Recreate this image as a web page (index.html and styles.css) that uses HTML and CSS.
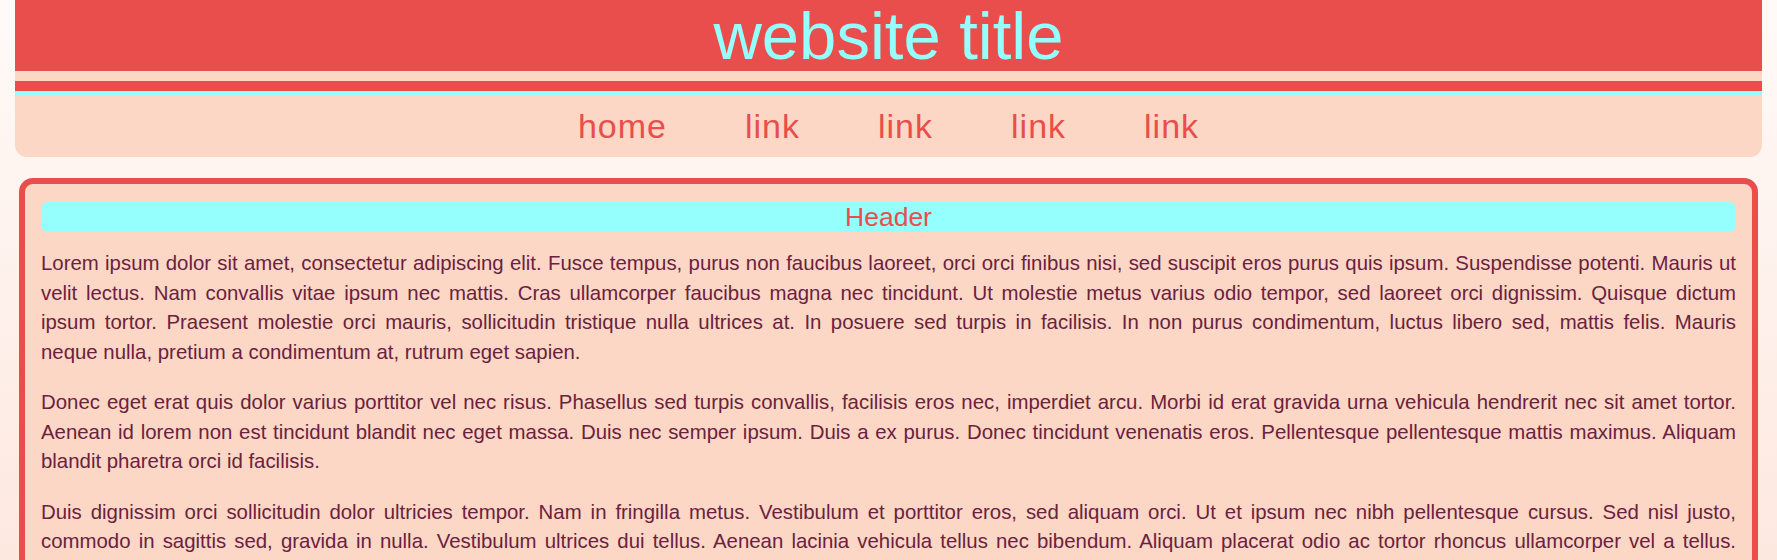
FILE: index.html
```html
<!DOCTYPE html>
<html lang="en">
<head>
<meta charset="utf-8">
<title>website title</title>
<link rel="stylesheet" href="styles.css">
</head>
<body>
<header class="site-header">
  <h1 class="site-title">website title</h1>
  <div class="stripe"></div>
  <nav class="site-nav">
    <a class="nav-link" href="#">home</a>
    <a class="nav-link" href="#">link</a>
    <a class="nav-link" href="#">link</a>
    <a class="nav-link" href="#">link</a>
    <a class="nav-link" href="#">link</a>
  </nav>
</header>
<main class="content">
  <h2 class="content-header">Header</h2>
  <p class="text"><span class="text-lines">Lorem ipsum dolor sit amet, consectetur adipiscing elit. Fusce tempus, purus non faucibus laoreet, orci orci finibus nisi, sed suscipit eros purus quis ipsum. Suspendisse potenti. Mauris ut<br>velit lectus. Nam convallis vitae ipsum nec mattis. Cras ullamcorper faucibus magna nec tincidunt. Ut molestie metus varius odio tempor, sed laoreet orci dignissim. Quisque dictum<br>ipsum tortor. Praesent molestie orci mauris, sollicitudin tristique nulla ultrices at. In posuere sed turpis in facilisis. In non purus condimentum, luctus libero sed, mattis felis. Mauris</span>neque nulla, pretium a condimentum at, rutrum eget sapien.</p>
  <p class="text"><span class="text-lines">Donec eget erat quis dolor varius porttitor vel nec risus. Phasellus sed turpis convallis, facilisis eros nec, imperdiet arcu. Morbi id erat gravida urna vehicula hendrerit nec sit amet tortor.<br>Aenean id lorem non est tincidunt blandit nec eget massa. Duis nec semper ipsum. Duis a ex purus. Donec tincidunt venenatis eros. Pellentesque pellentesque mattis maximus. Aliquam</span>blandit pharetra orci id facilisis.</p>
  <p class="text"><span class="text-lines">Duis dignissim orci sollicitudin dolor ultricies tempor. Nam in fringilla metus. Vestibulum et porttitor eros, sed aliquam orci. Ut et ipsum nec nibh pellentesque cursus. Sed nisl justo,<br>commodo in sagittis sed, gravida in nulla. Vestibulum ultrices dui tellus. Aenean lacinia vehicula tellus nec bibendum. Aliquam placerat odio ac tortor rhoncus ullamcorper vel a tellus.</span>Nulla facilisi. Integer vitae lectus non nisl porta iaculis. Sed luctus, justo in elementum aliquet, arcu lorem tempor sem, eget ultricies ligula elit vitae nunc.</p>
</main>
</body>
</html>
```
FILE: styles.css
```css
html {
  background: linear-gradient(to bottom, #fffaf8 0, #fde7de 600px, #fde3d8 900px);
  background-color: #fde3d8;
}

body {
  margin: 0;
  padding: 0 15px 30px;
  font-family: "Liberation Sans", Arial, sans-serif;
  color: #6b2140;
}

.site-header {
  background: #fcd7c5;
  border-radius: 0 0 12px 12px;
}

.site-title {
  margin: 0;
  background: #e94e4c;
  color: #94fffd;
  font-size: 67px;
  font-weight: normal;
  line-height: 71px;
  text-align: center;
}

.stripe {
  margin-top: 10px;
  height: 10px;
  background: #e94e4c;
  border-bottom: 5px solid #94fffd;
}

.site-nav {
  display: flex;
  justify-content: center;
  gap: 78px;
  height: 61px;
  line-height: 61px;
  font-size: 34px;
  letter-spacing: 1px;
}

.nav-link {
  color: #e94e4c;
  text-decoration: none;
}

.content {
  display: block;
  margin: 21px 4px 0;
  padding: 18px 16px 10px;
  background: #fcd7c5;
  border: 6px solid #e94e4c;
  border-radius: 14px;
}

.content-header {
  margin: 0 0 17px;
  background: #94fffd;
  color: #e94e4c;
  border-radius: 7px;
  font-size: 26.5px;
  font-weight: normal;
  line-height: 30px;
  text-align: center;
}

.text {
  margin: 0 0 21px;
  font-size: 20.4px;
  line-height: 29.5px;
  text-align: justify;
}

.text-lines {
  display: block;
  text-align: justify;
  text-align-last: justify;
}

.text:last-child {
  margin-bottom: 10px;
}
```
